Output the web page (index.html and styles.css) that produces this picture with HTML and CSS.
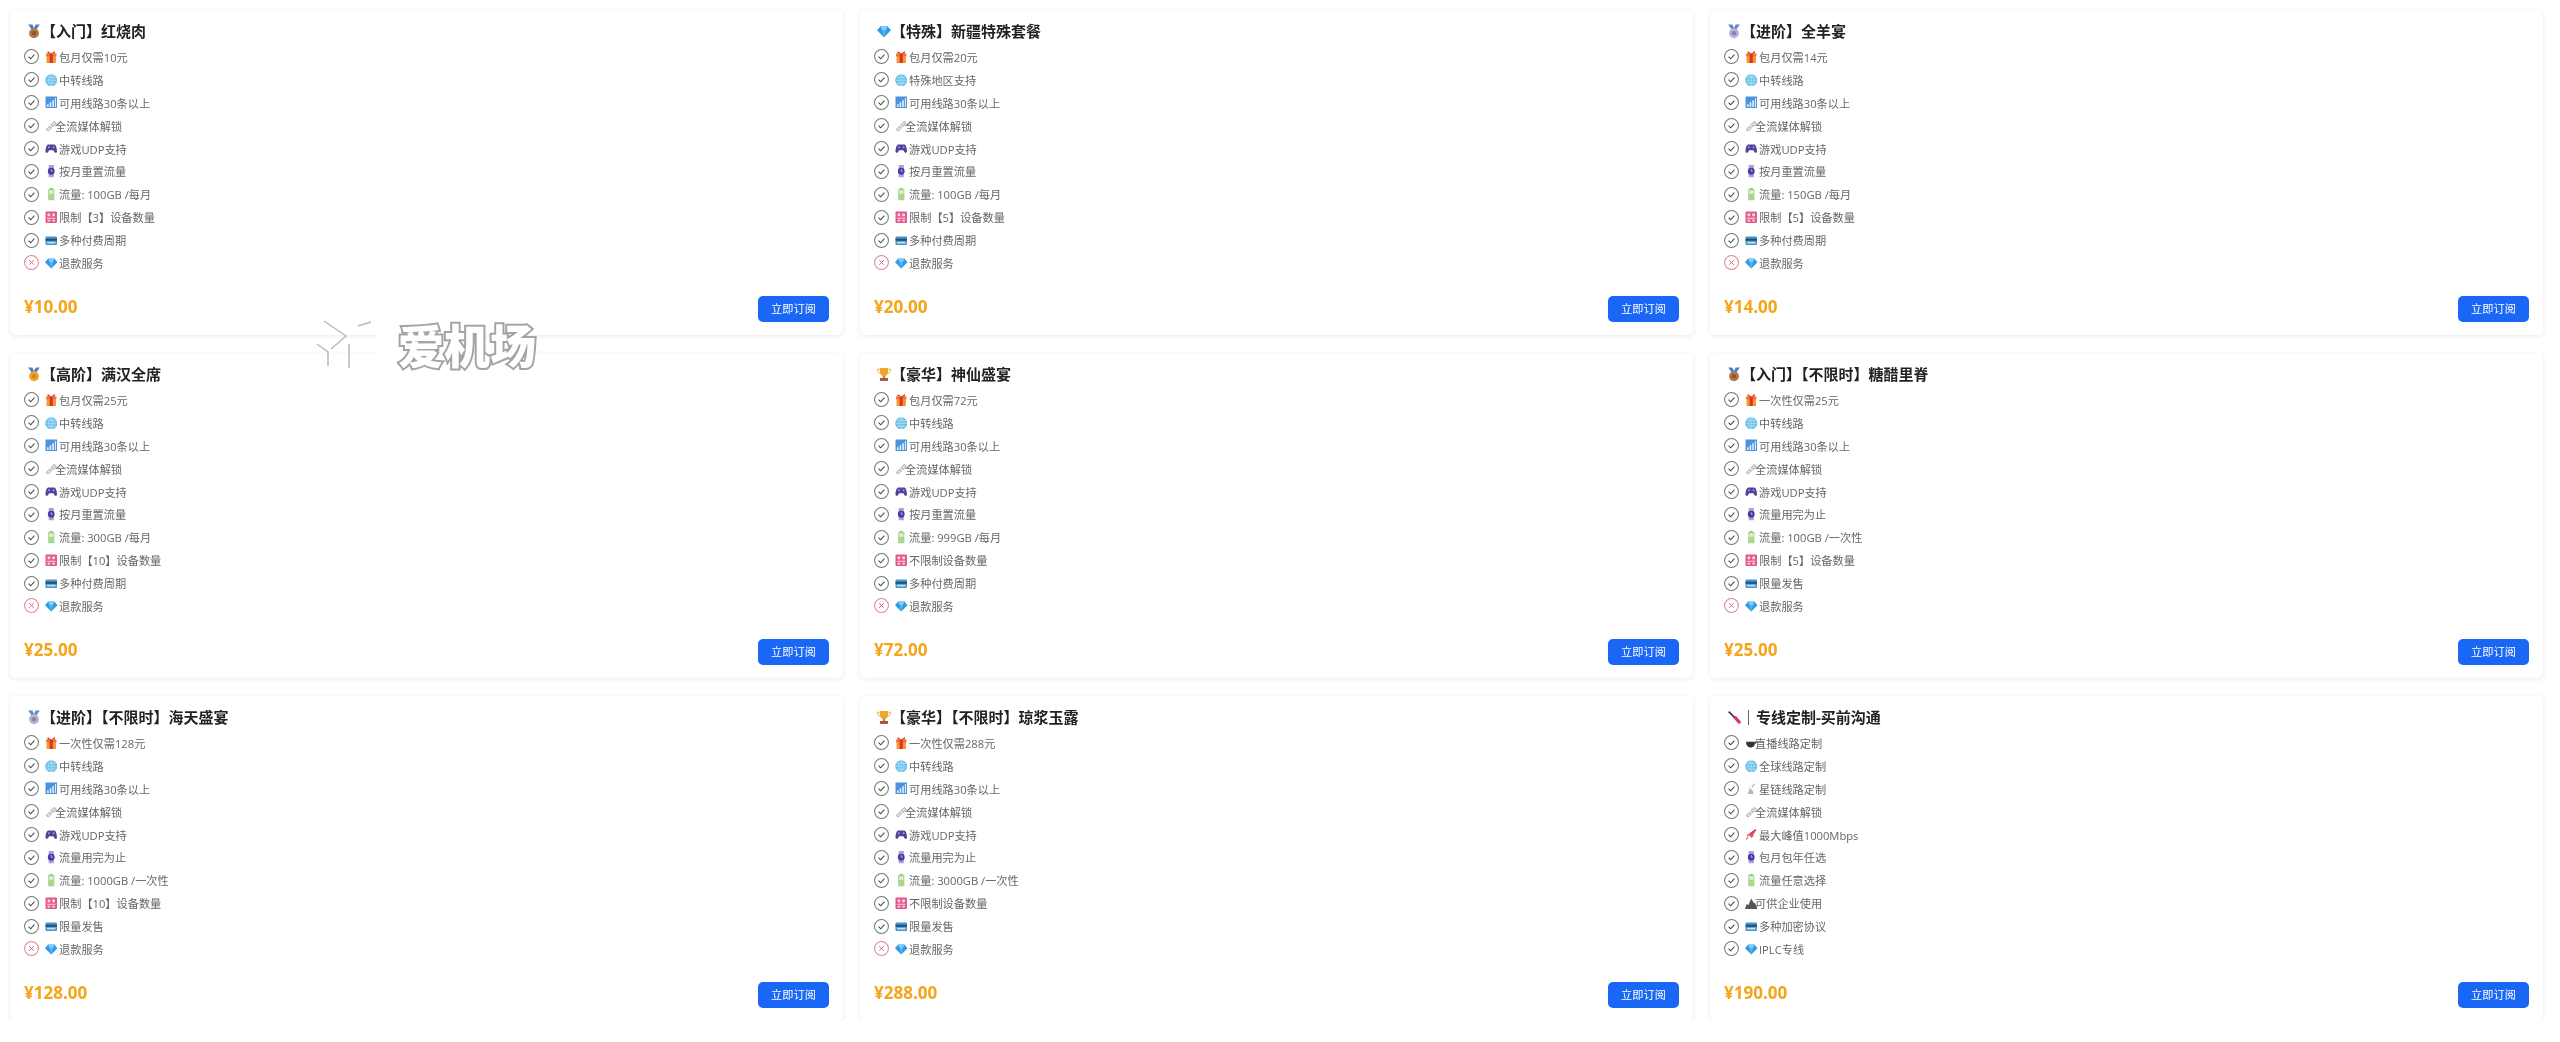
FILE: index.html
```html
<!DOCTYPE html>
<html>
<head>
    <title>爱机场 - 订阅套餐</title>
    <meta name="viewport" content="width=device-width, initial-scale=1.0">
    <link rel="stylesheet" href="styles.css">
</head>
<body>
    <svg class="defs" width="0" height="0">
        <symbol id="ok" viewBox="0 0 16 16"><circle cx="8" cy="8" r="7.4" fill="none" stroke="#6f7c78" stroke-width="1.100"/><path d="M4.900 8.200l2.200 2.200 4-4.300" fill="none" stroke="#444" stroke-width="1.100"/></symbol>
        <symbol id="no" viewBox="0 0 16 16"><circle cx="8" cy="8" r="7.4" fill="none" stroke="#dd8793" stroke-width="1.100"/><path d="M5.600 5.600l4.800 4.800M10.400 5.600l-4.800 4.800" fill="none" stroke="#d9606e" stroke-width="1"/></symbol>
        <symbol id="gift" viewBox="0 0 24 24"><path d="M3 7h18v16H3z" fill="#f29a2e"/><path d="M2 5h20v5H2z" fill="#f0762a"/><path d="M9 5h6v18H9z" fill="#d8342c"/><path d="M5 0l7 5 7-5v5H5z" fill="#d8342c"/></symbol>
        <symbol id="globe" viewBox="0 0 24 24"><circle cx="12" cy="12" r="11.500" fill="#63bfe8"/><path d="M1 12h22M12 1v22M3 6.500h18M3 17.500h18M12 1c-7 6-7 16 0 22M12 1c7 6 7 16 0 22" fill="none" stroke="#c4e7f6" stroke-width="1.200"/></symbol>
        <symbol id="chart" viewBox="0 0 24 24"><path d="M1 1h22v22H1z" fill="#4b93dc"/><path d="M4 16h3v5H4zM9 12h3v9H9zM14 8h3v13h-3zM19 4h2v17h-2z" fill="#e4f1fb"/></symbol>
        <symbol id="link" viewBox="0 0 24 24"><g fill="none" stroke="#b9bdc0" stroke-width="2.400"><path d="M3 20l6-6 3 3-6 6z"/><path d="M12 11l6-6 3 3-6 6z"/></g></symbol>
        <symbol id="pad" viewBox="0 0 24 24"><path d="M6 5h12c3 0 5 8 5 13 0 3-3 4-5 1l-2-3H8l-2 3c-2 3-5 2-5-1C1 13 3 5 6 5z" fill="#57409c"/><circle cx="7.500" cy="10" r="1.800" fill="#a99ad6"/><circle cx="16.500" cy="10" r="1.800" fill="#a99ad6"/></symbol>
        <symbol id="watch" viewBox="0 0 24 24"><path d="M7 0h10v24H7z" fill="#a7a2d8"/><circle cx="12" cy="12" r="6.500" fill="#4a3aa6"/><path d="M12 8v4h3" fill="none" stroke="#d7d3f1" stroke-width="1.400"/></symbol>
        <symbol id="bat" viewBox="0 0 24 24"><path d="M9 0h6v3H9z" fill="#8fb97a"/><path d="M6 2h12v22H6z" fill="#a9d88d"/><path d="M8 5h8v6H8z" fill="#e3f1cf"/></symbol>
        <symbol id="seat" viewBox="0 0 24 24"><rect x="1" y="1" width="22" height="22" rx="2" fill="#e4568c"/><path d="M5 5h5v5H5zM14 5h5v5h-5zM4 13h16v2H4zM5 17h5v3H5zM14 17h5v3h-5z" fill="#fbdde8"/></symbol>
        <symbol id="card" viewBox="0 0 24 24"><rect x="1" y="5" width="22" height="16" rx="1.500" fill="#4b93c9"/><path d="M1 9h22v4H1z" fill="#1c4f78"/><path d="M4 15h16v3H4z" fill="#bfe0f2"/></symbol>
        <symbol id="gem" viewBox="0 0 24 24"><path d="M6 3h12l6 7-12 12L0 10z" fill="#2f9be6"/><path d="M6 3h12l-3 7H9z" fill="#7fd0f7"/><path d="M9 10h6l-3 12z" fill="#57b7ef"/></symbol>
        <symbol id="medal3" viewBox="0 0 24 24"><path d="M2 0h7l5 10h-5zM22 0h-7l-5 10h5z" fill="#4d7fc4"/><circle cx="12" cy="15" r="8.500" fill="#b5764a"/><circle cx="12" cy="15" r="4" fill="#8f5734"/></symbol>
        <symbol id="medal2" viewBox="0 0 24 24"><path d="M2 0h7l5 10h-5zM22 0h-7l-5 10h5z" fill="#5f86c4"/><circle cx="12" cy="15" r="8.500" fill="#b4b5d6"/><circle cx="12" cy="15" r="4" fill="#8487ad"/></symbol>
        <symbol id="medal1" viewBox="0 0 24 24"><path d="M2 0h7l5 10h-5zM22 0h-7l-5 10h5z" fill="#4d7fc4"/><circle cx="12" cy="15" r="8.500" fill="#f3a32c"/><circle cx="12" cy="15" r="4" fill="#d9801b"/></symbol>
        <symbol id="cup" viewBox="0 0 24 24"><path d="M5 1h14v6c0 5-3 8-7 8s-7-3-7-8z" fill="#eda92d"/><path d="M5 3H1c0 5 2 7 5 7M19 3h4c0 5-2 7-5 7" fill="none" stroke="#eda92d" stroke-width="1.600"/><path d="M10 14h4v4h-4z" fill="#d9801b"/><path d="M5 18h14v5H5z" fill="#a8553f"/></symbol>
        <symbol id="driver" viewBox="0 0 24 24"><path d="M2 3l2-2 11 11-2 2z" fill="#3c3550"/><path d="M11 13l4-4 8 9c1 2 1 3 0 4s-3 1-4 0z" fill="#d1337c"/></symbol>
        <symbol id="bowl" viewBox="0 0 24 24"><path d="M2 9h17c1 7-3 11-8 11S2 16 2 9z" fill="#333"/><path d="M18 10l5-4-1 6-4 2z" fill="#555"/></symbol>
        <symbol id="dish" viewBox="0 0 24 24"><path d="M8 5c0 7 3 10 10 11L8 16z" fill="#c9cccf"/><path d="M5 23l4-9 5 2 3 7z" fill="#b4b8bc"/><path d="M13 10l6-7" fill="none" stroke="#a9adb1" stroke-width="2"/></symbol>
        <symbol id="rocket" viewBox="0 0 24 24"><path d="M6 12L20 2l2 2-10 14z" fill="#d9475a"/><path d="M4 12h6l-6 6zM12 14v6l6-6z" fill="#e56c7a"/><path d="M6 18l-4 4" stroke="#e58a58" stroke-width="2.500"/></symbol>
        <symbol id="hill" viewBox="0 0 24 24"><path d="M0 23l3-9 4 1 3-8 2-4 4 7 4 3 4 10z" fill="#555"/></symbol>
    </svg>

    <div class="plans">
        <div class="plan">
            <h3><svg class="head-icon"><use href="#medal3"/></svg>【入门】红烧肉</h3>
            <ul>
                <li><svg class="mark"><use href="#ok"/></svg><svg class="em"><use href="#gift"/></svg>包月仅需10元</li>
                <li><svg class="mark"><use href="#ok"/></svg><svg class="em"><use href="#globe"/></svg>中转线路</li>
                <li><svg class="mark"><use href="#ok"/></svg><svg class="em"><use href="#chart"/></svg>可用线路30条以上</li>
                <li><svg class="mark"><use href="#ok"/></svg><svg class="em tight"><use href="#link"/></svg>全流媒体解锁</li>
                <li><svg class="mark"><use href="#ok"/></svg><svg class="em"><use href="#pad"/></svg>游戏UDP支持</li>
                <li><svg class="mark"><use href="#ok"/></svg><svg class="em"><use href="#watch"/></svg>按月重置流量</li>
                <li><svg class="mark"><use href="#ok"/></svg><svg class="em"><use href="#bat"/></svg>流量: 100GB /每月</li>
                <li><svg class="mark"><use href="#ok"/></svg><svg class="em"><use href="#seat"/></svg>限制【3】设备数量</li>
                <li><svg class="mark"><use href="#ok"/></svg><svg class="em"><use href="#card"/></svg>多种付费周期</li>
                <li><svg class="mark"><use href="#no"/></svg><svg class="em"><use href="#gem"/></svg>退款服务</li>
            </ul>
            <div class="foot"><span class="price">¥10.00</span><a class="buy">立即订阅</a></div>
        </div>
        <div class="plan">
            <h3><svg class="head-icon"><use href="#gem"/></svg>【特殊】新疆特殊套餐</h3>
            <ul>
                <li><svg class="mark"><use href="#ok"/></svg><svg class="em"><use href="#gift"/></svg>包月仅需20元</li>
                <li><svg class="mark"><use href="#ok"/></svg><svg class="em"><use href="#globe"/></svg>特殊地区支持</li>
                <li><svg class="mark"><use href="#ok"/></svg><svg class="em"><use href="#chart"/></svg>可用线路30条以上</li>
                <li><svg class="mark"><use href="#ok"/></svg><svg class="em tight"><use href="#link"/></svg>全流媒体解锁</li>
                <li><svg class="mark"><use href="#ok"/></svg><svg class="em"><use href="#pad"/></svg>游戏UDP支持</li>
                <li><svg class="mark"><use href="#ok"/></svg><svg class="em"><use href="#watch"/></svg>按月重置流量</li>
                <li><svg class="mark"><use href="#ok"/></svg><svg class="em"><use href="#bat"/></svg>流量: 100GB /每月</li>
                <li><svg class="mark"><use href="#ok"/></svg><svg class="em"><use href="#seat"/></svg>限制【5】设备数量</li>
                <li><svg class="mark"><use href="#ok"/></svg><svg class="em"><use href="#card"/></svg>多种付费周期</li>
                <li><svg class="mark"><use href="#no"/></svg><svg class="em"><use href="#gem"/></svg>退款服务</li>
            </ul>
            <div class="foot"><span class="price">¥20.00</span><a class="buy">立即订阅</a></div>
        </div>
        <div class="plan">
            <h3><svg class="head-icon"><use href="#medal2"/></svg>【进阶】全羊宴</h3>
            <ul>
                <li><svg class="mark"><use href="#ok"/></svg><svg class="em"><use href="#gift"/></svg>包月仅需14元</li>
                <li><svg class="mark"><use href="#ok"/></svg><svg class="em"><use href="#globe"/></svg>中转线路</li>
                <li><svg class="mark"><use href="#ok"/></svg><svg class="em"><use href="#chart"/></svg>可用线路30条以上</li>
                <li><svg class="mark"><use href="#ok"/></svg><svg class="em tight"><use href="#link"/></svg>全流媒体解锁</li>
                <li><svg class="mark"><use href="#ok"/></svg><svg class="em"><use href="#pad"/></svg>游戏UDP支持</li>
                <li><svg class="mark"><use href="#ok"/></svg><svg class="em"><use href="#watch"/></svg>按月重置流量</li>
                <li><svg class="mark"><use href="#ok"/></svg><svg class="em"><use href="#bat"/></svg>流量: 150GB /每月</li>
                <li><svg class="mark"><use href="#ok"/></svg><svg class="em"><use href="#seat"/></svg>限制【5】设备数量</li>
                <li><svg class="mark"><use href="#ok"/></svg><svg class="em"><use href="#card"/></svg>多种付费周期</li>
                <li><svg class="mark"><use href="#no"/></svg><svg class="em"><use href="#gem"/></svg>退款服务</li>
            </ul>
            <div class="foot"><span class="price">¥14.00</span><a class="buy">立即订阅</a></div>
        </div>

        <div class="plan">
            <h3><svg class="head-icon"><use href="#medal1"/></svg>【高阶】满汉全席</h3>
            <ul>
                <li><svg class="mark"><use href="#ok"/></svg><svg class="em"><use href="#gift"/></svg>包月仅需25元</li>
                <li><svg class="mark"><use href="#ok"/></svg><svg class="em"><use href="#globe"/></svg>中转线路</li>
                <li><svg class="mark"><use href="#ok"/></svg><svg class="em"><use href="#chart"/></svg>可用线路30条以上</li>
                <li><svg class="mark"><use href="#ok"/></svg><svg class="em tight"><use href="#link"/></svg>全流媒体解锁</li>
                <li><svg class="mark"><use href="#ok"/></svg><svg class="em"><use href="#pad"/></svg>游戏UDP支持</li>
                <li><svg class="mark"><use href="#ok"/></svg><svg class="em"><use href="#watch"/></svg>按月重置流量</li>
                <li><svg class="mark"><use href="#ok"/></svg><svg class="em"><use href="#bat"/></svg>流量: 300GB /每月</li>
                <li><svg class="mark"><use href="#ok"/></svg><svg class="em"><use href="#seat"/></svg>限制【10】设备数量</li>
                <li><svg class="mark"><use href="#ok"/></svg><svg class="em"><use href="#card"/></svg>多种付费周期</li>
                <li><svg class="mark"><use href="#no"/></svg><svg class="em"><use href="#gem"/></svg>退款服务</li>
            </ul>
            <div class="foot"><span class="price">¥25.00</span><a class="buy">立即订阅</a></div>
        </div>
        <div class="plan">
            <h3><svg class="head-icon"><use href="#cup"/></svg>【豪华】神仙盛宴</h3>
            <ul>
                <li><svg class="mark"><use href="#ok"/></svg><svg class="em"><use href="#gift"/></svg>包月仅需72元</li>
                <li><svg class="mark"><use href="#ok"/></svg><svg class="em"><use href="#globe"/></svg>中转线路</li>
                <li><svg class="mark"><use href="#ok"/></svg><svg class="em"><use href="#chart"/></svg>可用线路30条以上</li>
                <li><svg class="mark"><use href="#ok"/></svg><svg class="em tight"><use href="#link"/></svg>全流媒体解锁</li>
                <li><svg class="mark"><use href="#ok"/></svg><svg class="em"><use href="#pad"/></svg>游戏UDP支持</li>
                <li><svg class="mark"><use href="#ok"/></svg><svg class="em"><use href="#watch"/></svg>按月重置流量</li>
                <li><svg class="mark"><use href="#ok"/></svg><svg class="em"><use href="#bat"/></svg>流量: 999GB /每月</li>
                <li><svg class="mark"><use href="#ok"/></svg><svg class="em"><use href="#seat"/></svg>不限制设备数量</li>
                <li><svg class="mark"><use href="#ok"/></svg><svg class="em"><use href="#card"/></svg>多种付费周期</li>
                <li><svg class="mark"><use href="#no"/></svg><svg class="em"><use href="#gem"/></svg>退款服务</li>
            </ul>
            <div class="foot"><span class="price">¥72.00</span><a class="buy">立即订阅</a></div>
        </div>
        <div class="plan">
            <h3><svg class="head-icon"><use href="#medal3"/></svg>【入门】【不限时】糖醋里脊</h3>
            <ul>
                <li><svg class="mark"><use href="#ok"/></svg><svg class="em"><use href="#gift"/></svg>一次性仅需25元</li>
                <li><svg class="mark"><use href="#ok"/></svg><svg class="em"><use href="#globe"/></svg>中转线路</li>
                <li><svg class="mark"><use href="#ok"/></svg><svg class="em"><use href="#chart"/></svg>可用线路30条以上</li>
                <li><svg class="mark"><use href="#ok"/></svg><svg class="em tight"><use href="#link"/></svg>全流媒体解锁</li>
                <li><svg class="mark"><use href="#ok"/></svg><svg class="em"><use href="#pad"/></svg>游戏UDP支持</li>
                <li><svg class="mark"><use href="#ok"/></svg><svg class="em"><use href="#watch"/></svg>流量用完为止</li>
                <li><svg class="mark"><use href="#ok"/></svg><svg class="em"><use href="#bat"/></svg>流量: 100GB /一次性</li>
                <li><svg class="mark"><use href="#ok"/></svg><svg class="em"><use href="#seat"/></svg>限制【5】设备数量</li>
                <li><svg class="mark"><use href="#ok"/></svg><svg class="em"><use href="#card"/></svg>限量发售</li>
                <li><svg class="mark"><use href="#no"/></svg><svg class="em"><use href="#gem"/></svg>退款服务</li>
            </ul>
            <div class="foot"><span class="price">¥25.00</span><a class="buy">立即订阅</a></div>
        </div>

        <div class="plan">
            <h3><svg class="head-icon"><use href="#medal2"/></svg>【进阶】【不限时】海天盛宴</h3>
            <ul>
                <li><svg class="mark"><use href="#ok"/></svg><svg class="em"><use href="#gift"/></svg>一次性仅需128元</li>
                <li><svg class="mark"><use href="#ok"/></svg><svg class="em"><use href="#globe"/></svg>中转线路</li>
                <li><svg class="mark"><use href="#ok"/></svg><svg class="em"><use href="#chart"/></svg>可用线路30条以上</li>
                <li><svg class="mark"><use href="#ok"/></svg><svg class="em tight"><use href="#link"/></svg>全流媒体解锁</li>
                <li><svg class="mark"><use href="#ok"/></svg><svg class="em"><use href="#pad"/></svg>游戏UDP支持</li>
                <li><svg class="mark"><use href="#ok"/></svg><svg class="em"><use href="#watch"/></svg>流量用完为止</li>
                <li><svg class="mark"><use href="#ok"/></svg><svg class="em"><use href="#bat"/></svg>流量: 1000GB /一次性</li>
                <li><svg class="mark"><use href="#ok"/></svg><svg class="em"><use href="#seat"/></svg>限制【10】设备数量</li>
                <li><svg class="mark"><use href="#ok"/></svg><svg class="em"><use href="#card"/></svg>限量发售</li>
                <li><svg class="mark"><use href="#no"/></svg><svg class="em"><use href="#gem"/></svg>退款服务</li>
            </ul>
            <div class="foot"><span class="price">¥128.00</span><a class="buy">立即订阅</a></div>
        </div>
        <div class="plan">
            <h3><svg class="head-icon"><use href="#cup"/></svg>【豪华】【不限时】琼浆玉露</h3>
            <ul>
                <li><svg class="mark"><use href="#ok"/></svg><svg class="em"><use href="#gift"/></svg>一次性仅需288元</li>
                <li><svg class="mark"><use href="#ok"/></svg><svg class="em"><use href="#globe"/></svg>中转线路</li>
                <li><svg class="mark"><use href="#ok"/></svg><svg class="em"><use href="#chart"/></svg>可用线路30条以上</li>
                <li><svg class="mark"><use href="#ok"/></svg><svg class="em tight"><use href="#link"/></svg>全流媒体解锁</li>
                <li><svg class="mark"><use href="#ok"/></svg><svg class="em"><use href="#pad"/></svg>游戏UDP支持</li>
                <li><svg class="mark"><use href="#ok"/></svg><svg class="em"><use href="#watch"/></svg>流量用完为止</li>
                <li><svg class="mark"><use href="#ok"/></svg><svg class="em"><use href="#bat"/></svg>流量: 3000GB /一次性</li>
                <li><svg class="mark"><use href="#ok"/></svg><svg class="em"><use href="#seat"/></svg>不限制设备数量</li>
                <li><svg class="mark"><use href="#ok"/></svg><svg class="em"><use href="#card"/></svg>限量发售</li>
                <li><svg class="mark"><use href="#no"/></svg><svg class="em"><use href="#gem"/></svg>退款服务</li>
            </ul>
            <div class="foot"><span class="price">¥288.00</span><a class="buy">立即订阅</a></div>
        </div>
        <div class="plan">
            <h3><svg class="head-icon"><use href="#driver"/></svg>｜专线定制-买前沟通</h3>
            <ul>
                <li><svg class="mark"><use href="#ok"/></svg><svg class="em tight"><use href="#bowl"/></svg>直播线路定制</li>
                <li><svg class="mark"><use href="#ok"/></svg><svg class="em"><use href="#globe"/></svg>全球线路定制</li>
                <li><svg class="mark"><use href="#ok"/></svg><svg class="em"><use href="#dish"/></svg>星链线路定制</li>
                <li><svg class="mark"><use href="#ok"/></svg><svg class="em tight"><use href="#link"/></svg>全流媒体解锁</li>
                <li><svg class="mark"><use href="#ok"/></svg><svg class="em"><use href="#rocket"/></svg>最大峰值1000Mbps</li>
                <li><svg class="mark"><use href="#ok"/></svg><svg class="em"><use href="#watch"/></svg>包月包年任选</li>
                <li><svg class="mark"><use href="#ok"/></svg><svg class="em"><use href="#bat"/></svg>流量任意选择</li>
                <li><svg class="mark"><use href="#ok"/></svg><svg class="em tight"><use href="#hill"/></svg>可供企业使用</li>
                <li><svg class="mark"><use href="#ok"/></svg><svg class="em"><use href="#card"/></svg>多种加密协议</li>
                <li><svg class="mark"><use href="#ok"/></svg><svg class="em"><use href="#gem"/></svg>IPLC专线</li>
            </ul>
            <div class="foot"><span class="price">¥190.00</span><a class="buy">立即订阅</a></div>
        </div>
    </div>

    <div class="watermark">
        <svg class="wm-logo" viewBox="0 0 60 50"><path d="M8 1l22 15-15 13M42 6l13-4M1 24l11 8v14M33 24v24" fill="none" stroke="#bbb" stroke-width="1.500"/></svg>
        <i class="wm-patch"></i>
        <span class="wm-text">爱机场</span>
    </div>
</body>
</html>
```

FILE: styles.css
```css
body {
    font-family: "Open Sans", "Noto Sans CJK SC", sans-serif;
    margin: 0;
    padding: 0;
    background-color: #fff;
    color: #666;
}
.defs {
    position: absolute;
}
.plans {
    display: grid;
    grid-template-columns: repeat(3, 833px);
    gap: 18px 17px;
    padding: 10px 17px 0 10px;
    filter: blur(0.35px);
}
.plan {
    background-color: #fff;
    border-radius: 5px;
    box-shadow: 0 1px 5px rgba(0,0,0,0.09);
    padding: 13px 14px 13px;
    height: 325px;
    box-sizing: border-box;
    display: flex;
    flex-direction: column;
}
.plan h3 {
    display: flex;
    align-items: center;
    margin: 0;
    height: 16px;
    font-size: 15px;
    line-height: 16px;
    font-weight: 700;
    color: #222;
}
.head-icon {
    width: 14px;
    height: 15px;
    margin-left: 3px;
    flex: none;
}
.plan ul {
    list-style-type: none;
    margin: 6.5px 0 0;
    padding: 0;
}
.plan li {
    display: flex;
    align-items: center;
    height: 22.9px;
    font-size: 11.2px;
    white-space: pre;
}
.mark {
    width: 15px;
    height: 15px;
    margin-right: 6px;
    flex: none;
}
.em {
    width: 12.5px;
    height: 12.5px;
    margin-right: 1.5px;
    flex: none;
}
.em.tight {
    margin-right: -2.5px;
}
.foot {
    margin-top: auto;
    display: flex;
    align-items: center;
    justify-content: space-between;
}
.price {
    font-size: 17px;
    line-height: 20px;
    margin-bottom: 5px;
    font-weight: 700;
    color: #f5a519;
}
.buy {
    width: 71px;
    height: 26px;
    line-height: 26px;
    text-align: center;
    font-size: 11.2px;
    color: #fff;
    background-color: #1a66f5;
    border-radius: 5px;
}
.watermark {
    position: absolute;
    left: 316px;
    top: 320px;
    display: flex;
    align-items: center;
}
.wm-logo {
    width: 60px;
    height: 50px;
}
.wm-patch {
    width: 22px;
    height: 30px;
    background-color: #fff;
}
.wm-text {
    font-size: 46px;
    line-height: 50px;
    font-weight: 900;
    color: #fff;
    -webkit-text-stroke: 4px #a4a4a4;
    paint-order: stroke fill;
    filter: blur(0.5px);
}
```
